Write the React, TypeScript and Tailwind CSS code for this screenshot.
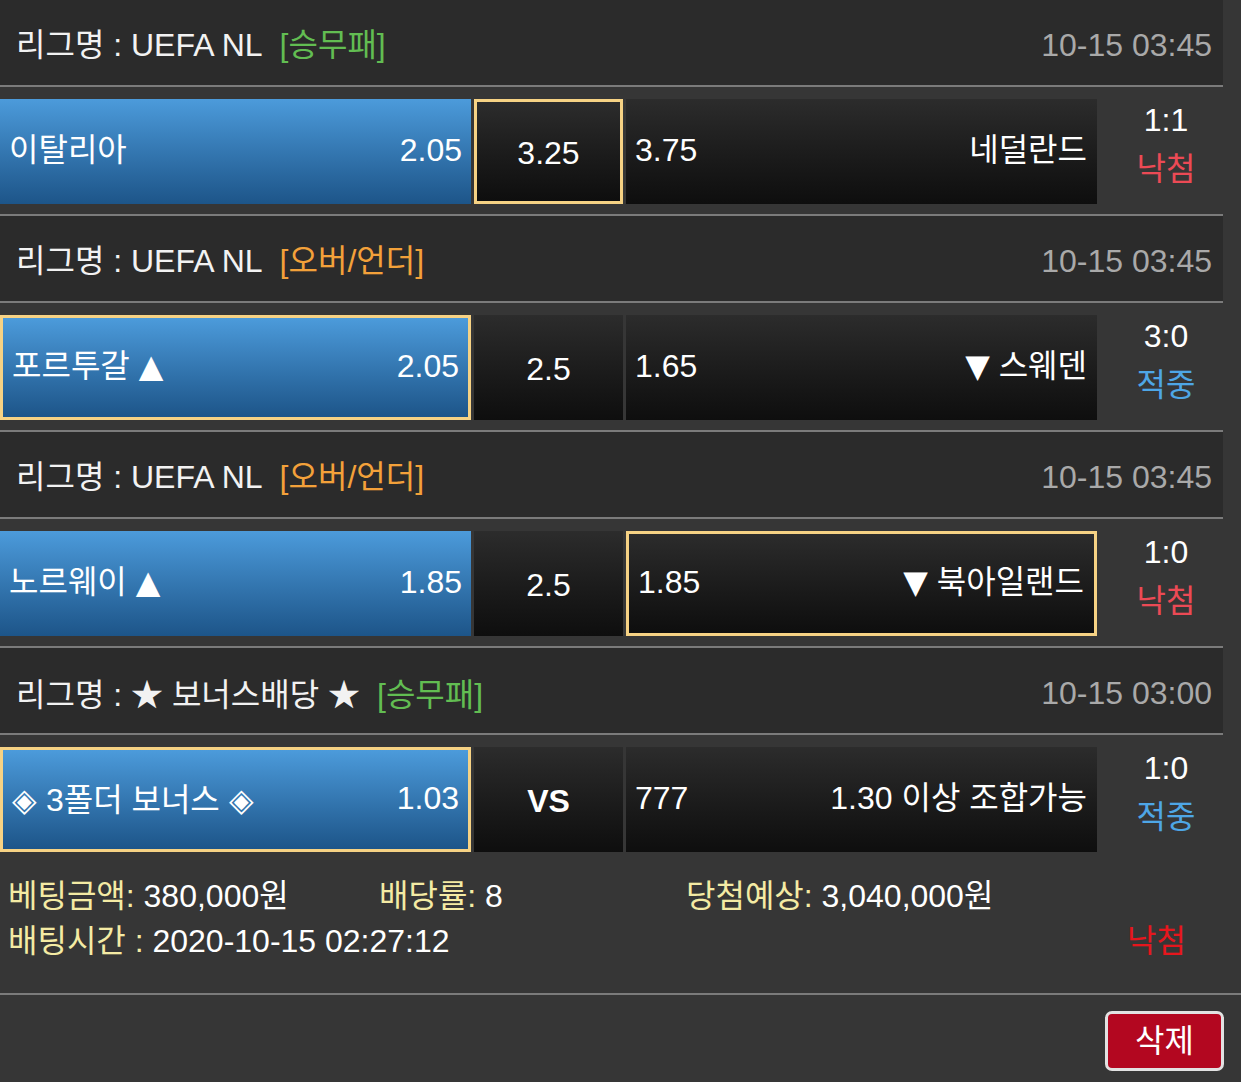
import React from "react";

type Bet = {
  league: string;
  type: string;
  typeColor: string;
  date: string;
  home: string;
  homeOdds: string;
  mid: string;
  midBold?: boolean;
  awayOdds: string;
  away: string;
  score: string;
  result: string;
  resultColor: string;
  sel: "home" | "mid" | "away";
};

const bets: Bet[] = [
  {
    league: "UEFA NL",
    type: "[승무패]",
    typeColor: "text-[#62bd52]",
    date: "10-15 03:45",
    home: "이탈리아",
    homeOdds: "2.05",
    mid: "3.25",
    awayOdds: "3.75",
    away: "네덜란드",
    score: "1:1",
    result: "낙첨",
    resultColor: "text-[#ec4a55]",
    sel: "mid",
  },
  {
    league: "UEFA NL",
    type: "[오버/언더]",
    typeColor: "text-[#f3a13a]",
    date: "10-15 03:45",
    home: "포르투갈 ▲",
    homeOdds: "2.05",
    mid: "2.5",
    awayOdds: "1.65",
    away: "▼ 스웨덴",
    score: "3:0",
    result: "적중",
    resultColor: "text-[#4ea6e6]",
    sel: "home",
  },
  {
    league: "UEFA NL",
    type: "[오버/언더]",
    typeColor: "text-[#f3a13a]",
    date: "10-15 03:45",
    home: "노르웨이 ▲",
    homeOdds: "1.85",
    mid: "2.5",
    awayOdds: "1.85",
    away: "▼ 북아일랜드",
    score: "1:0",
    result: "낙첨",
    resultColor: "text-[#ec4a55]",
    sel: "away",
  },
  {
    league: "★ 보너스배당 ★",
    type: "[승무패]",
    typeColor: "text-[#62bd52]",
    date: "10-15 03:00",
    home: "◈ 3폴더 보너스 ◈",
    homeOdds: "1.03",
    mid: "VS",
    midBold: true,
    awayOdds: "777",
    away: "1.30 이상 조합가능",
    score: "1:0",
    result: "적중",
    resultColor: "text-[#4ea6e6]",
    sel: "home",
  },
];

const font = {
  fontFamily: '"Liberation Sans", "Noto Sans CJK KR", sans-serif',
};

function Sym({ text }: { text: string }) {
  const parts = text.split(/([▲▼◈★])/);
  return (
    <>
      {parts.map((p, i) =>
        /[▲▼]/.test(p) ? (
          <span key={i} className="font-['DejaVu_Sans']">
            {p}
          </span>
        ) : /[◈★]/.test(p) ? (
          <span key={i} className="font-['Noto_Sans_CJK_KR']">
            {p}
          </span>
        ) : (
          <React.Fragment key={i}>{p}</React.Fragment>
        )
      )}
    </>
  );
}

function Section({ b, last }: { b: Bet; last: boolean }) {
  const goldSel = "border-[3px] border-[#f6d284]";
  return (
    <div>
      <div className="h-[87px] bg-[#2b2b2b] flex items-center justify-between pt-[5px] pl-[16px] pr-[11px] border-b-2 border-[#7b7b7b]">
        <div className="text-[#f2f2f2]">
          리그명 : <Sym text={b.league} />
          <span className={`ml-[17px] ${b.typeColor}`}>{b.type}</span>
        </div>
        <div className="text-[#a9a9a9]">{b.date}</div>
      </div>
      <div
        className={`pt-[12px] ${last ? "pb-0" : "pb-[10px] border-b-2 border-[#7b7b7b]"} bg-[#363636]`}
      >
        <div className="flex h-[105px]">
          <div
            className={`w-[471px] shrink-0 flex items-center justify-between pl-[9px] pr-[9px] bg-gradient-to-b from-[#4c9bdb] to-[#1d5589] text-white ${
              b.sel === "home" ? goldSel : ""
            }`}
          >
            <span className="-mt-[3px]">
              <Sym text={b.home} />
            </span>
            <span className="-mt-[3px]">{b.homeOdds}</span>
          </div>
          <div
            className={`ml-[3px] w-[149px] shrink-0 flex items-center justify-center bg-gradient-to-b from-[#2c2c2c] to-[#0e0e0e] text-white ${
              b.midBold ? "font-bold" : ""
            } ${b.sel === "mid" ? goldSel : ""}`}
          >
            <span className="mt-[2px]">{b.mid}</span>
          </div>
          <div
            className={`ml-[3px] w-[471px] shrink-0 flex items-center justify-between pl-[9px] pr-[10px] bg-gradient-to-b from-[#2c2c2c] to-[#0e0e0e] text-white ${
              b.sel === "away" ? goldSel : ""
            }`}
          >
            <span className="-mt-[3px]">{b.awayOdds}</span>
            <span className="-mt-[3px]">
              <Sym text={b.away} />
            </span>
          </div>
          <div className="flex-1 flex flex-col items-center pl-[12px] pt-[2px] gap-[11px] leading-[38px]">
            <span className="text-white">{b.score}</span>
            <span className={b.resultColor}>{b.result}</span>
          </div>
        </div>
      </div>
    </div>
  );
}

export default function App() {
  return (
    <div
      className="min-h-screen bg-[#363636] text-[32px] leading-none"
      style={font}
    >
      <div className="w-[1223px]">
        {bets.map((b, i) => (
          <Section key={i} b={b} last={i === bets.length - 1} />
        ))}
      </div>
      <div className="pt-[22px] pb-[29px] pl-[8px] leading-[45px] border-b-2 border-[#7b7b7b]">
        <div className="flex">
          <div className="w-[371px]">
            <span className="text-[#f4eba4]">베팅금액:</span>
            <span className="text-white"> 380,000원</span>
          </div>
          <div className="w-[307px]">
            <span className="text-[#f4eba4]">배당률:</span>
            <span className="text-white"> 8</span>
          </div>
          <div>
            <span className="text-[#f4eba4]">당첨예상:</span>
            <span className="text-white"> 3,040,000원</span>
          </div>
        </div>
        <div className="flex justify-between pr-[55px]">
          <div>
            <span className="text-[#f4eba4]">배팅시간 :</span>
            <span className="text-white"> 2020-10-15 02:27:12</span>
          </div>
          <span className="text-[#e6161d]">낙첨</span>
        </div>
      </div>
      <div className="flex justify-end pt-[16px] pr-[17px] pb-[10px]">
        <button className="w-[119px] h-[60px] rounded-[7px] border-[3px] border-[#e2e2e2] bg-[#b30720] text-white text-[32px] flex items-center justify-center">
          삭제
        </button>
      </div>
    </div>
  );
}
